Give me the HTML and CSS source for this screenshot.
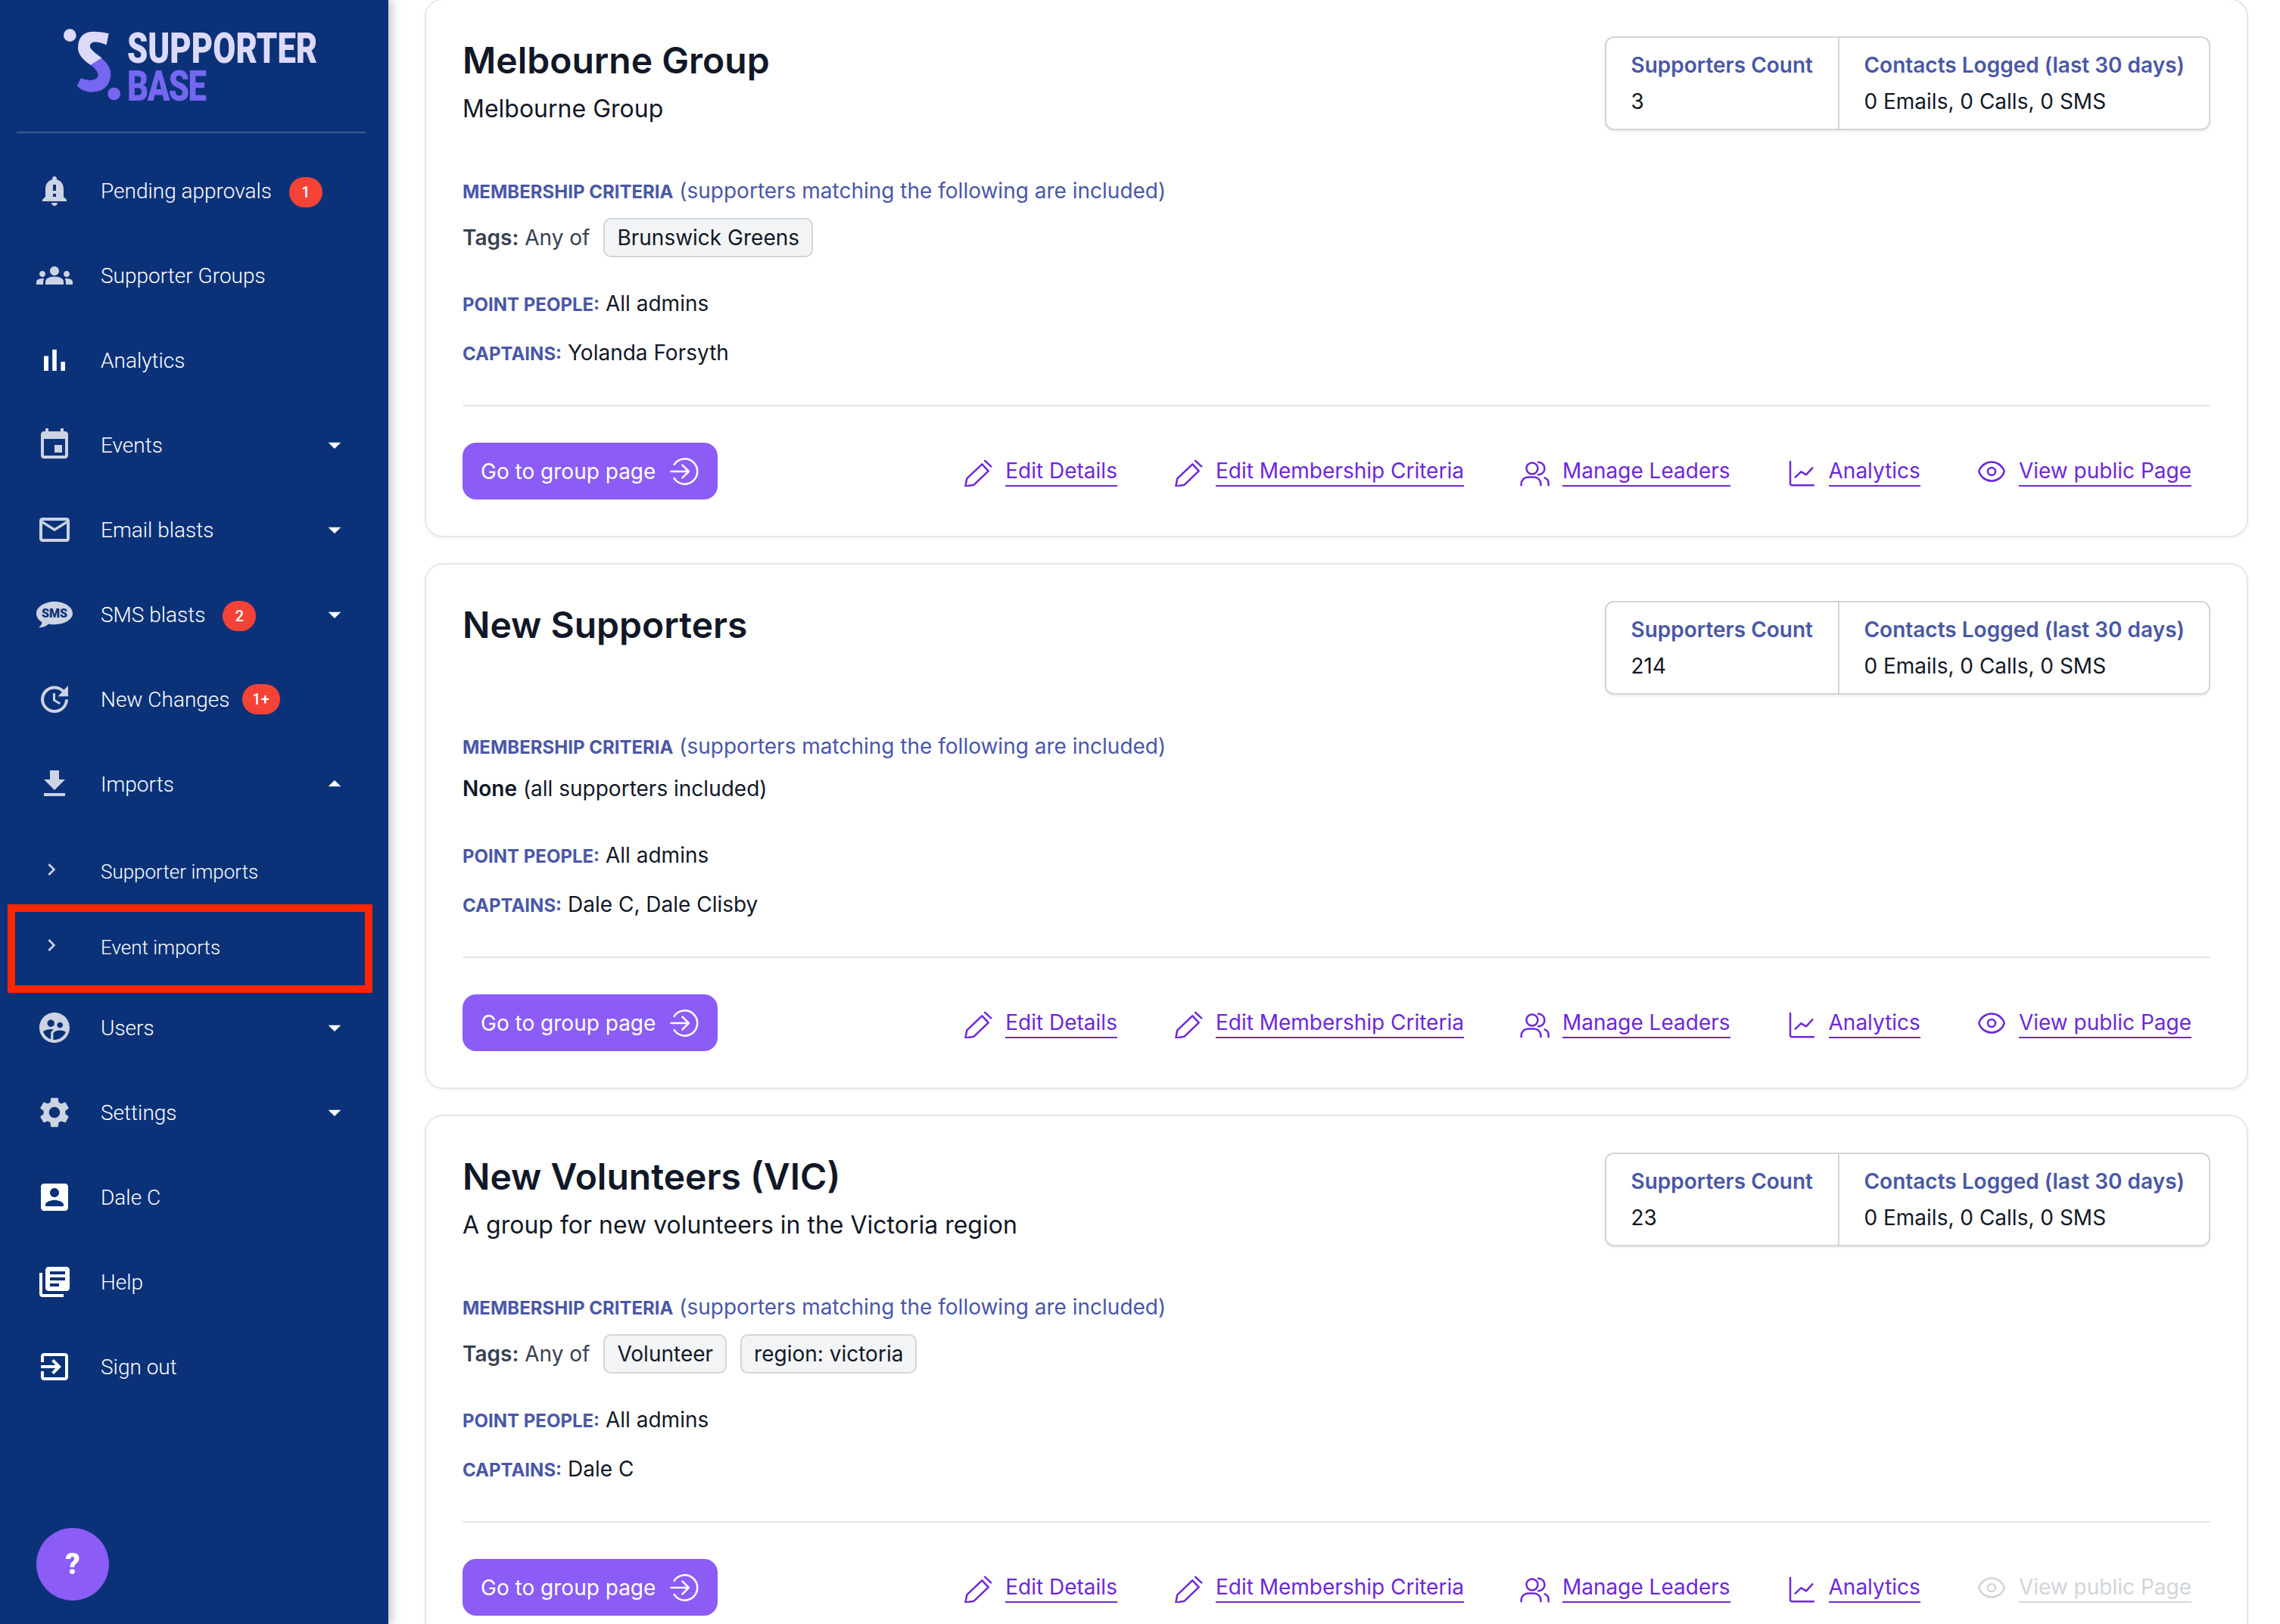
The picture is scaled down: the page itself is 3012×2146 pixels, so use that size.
FILE: index.html
```html
<!DOCTYPE html>
<html lang="en">
<head>
    <meta charset="UTF-8">
    <title>Supporter Groups - Supporter Base</title>
    <link rel="stylesheet" href="styles.css">
</head>
<body>
    <svg class="icon-defs" width="0" height="0">
        <symbol id="i-pencil" viewBox="0 0 24 24" overflow="visible"><path d="M15.200 6.200L20.200 11.600 8.800 22.600 2 23.800 3.200 17.600zM17.500 3.500L22.300 8" fill="none" stroke="currentColor" stroke-width="1.500" stroke-linejoin="round" stroke-linecap="round"/></symbol>
        <symbol id="i-users" viewBox="0 0 24 24" overflow="visible"><circle cx="9.600" cy="9.600" r="4.500" fill="none" stroke="currentColor" stroke-width="1.500"/><path d="M14.500 4.600a5 5 0 0 1 0 10M1 23v-1a5.500 5.500 0 0 1 5.500-5.500h4.500a5.500 5.500 0 0 1 5.500 5.500v1M19.600 17a5 5 0 0 1 3 5v1" fill="none" stroke="currentColor" stroke-width="1.500" stroke-linecap="round"/></symbol>
        <symbol id="i-chart" viewBox="0 0 24 24" overflow="visible"><path d="M3 4.200V21.500A1.500 1.500 0 0 0 4.500 23H21.600M7 16.600l4.600-4.400 4 2.400 5-5.400" fill="none" stroke="currentColor" stroke-width="1.500" stroke-linecap="round" stroke-linejoin="round"/></symbol>
        <symbol id="i-eye" viewBox="0 0 24 24"><path d="M2.036 12.322a1.012 1.012 0 010-.639C3.423 7.510 7.360 4.500 12 4.500c4.638 0 8.573 3.007 9.963 7.178.07.207.07.431 0 .639C20.577 16.490 16.640 19.500 12 19.500c-4.638 0-8.573-3.007-9.963-7.178z" fill="none" stroke="currentColor" stroke-width="1.500"/><circle cx="12" cy="12" r="3" fill="none" stroke="currentColor" stroke-width="1.500"/></symbol>
        <symbol id="i-go" viewBox="0 0 24 24"><path d="M4 6.500a10 10 0 1 1 0 11M1.500 12H15M10.500 7l5 5-5 5" fill="none" stroke="currentColor" stroke-width="1.500" stroke-linecap="round" stroke-linejoin="round"/></symbol>
        <symbol id="i-drop" viewBox="0 0 24 24"><path d="M7 10l5 5 5-5z" fill="currentColor"/></symbol>
        <symbol id="i-up" viewBox="0 0 24 24"><path d="M7 14l5-5 5 5z" fill="currentColor"/></symbol>
        <symbol id="i-chevron" viewBox="0 0 24 24"><path d="M10 6L8.590 7.410 13.170 12l-4.580 4.590L10 18l6-6z" fill="currentColor"/></symbol>
    </svg>

    <div class="layout">
        <aside class="sidebar">
            <div class="logo">
                <svg class="logo-mark" viewBox="40 30 240 300" width="80" height="100">
                    <circle cx="68" cy="65" r="25" fill="#dcd9fb"/>
                    <path d="M222 58L213 103Q180 88 160 92 145 98 148 112 152 125 195 155L150 183Q100 150 100 115 100 50 165 50 195 50 222 58z" fill="#dcd9fb"/>
                    <path d="M193 155Q235 190 230 225 222 290 150 290 120 290 96 265L112 235Q135 245 150 243 180 240 180 222 180 205 150 183z" fill="#7567f0"/>
                    <circle cx="243" cy="297" r="25" fill="#7567f0"/>
                </svg>
                <div class="logo-text">
                    <span class="logo-top">SUPPORTER</span>
                    <span class="logo-bottom">BASE</span>
                </div>
            </div>

            <nav class="nav">
                <a class="nav-item">
                    <svg class="nav-icon muted" viewBox="0 0 24 24"><path d="M18 16v-5c0-3.070-1.640-5.640-4.500-6.320V4c0-.83-.67-1.500-1.500-1.500s-1.500.67-1.500 1.500v.68C7.630 5.360 6 7.920 6 11v5l-2 2v1h16v-1l-2-2zm-5 0h-2v-2h2v2zm0-4h-2V8h2v4zm-1 10c1.100 0 2-.9 2-2h-4c0 1.100.9 2 2 2z"/></svg>
                    <span class="nav-label">Pending approvals</span>
                    <span class="badge">1</span>
                </a>
                <a class="nav-item">
                    <svg class="nav-icon muted" viewBox="0 0 24 24"><path d="M12 12.750c1.630 0 3.070.39 4.240.9 1.080.48 1.760 1.560 1.760 2.730V18H6v-1.610c0-1.180.68-2.260 1.760-2.730 1.170-.52 2.610-.91 4.240-.91zM4 13c1.100 0 2-.9 2-2s-.9-2-2-2-2 .9-2 2 .9 2 2 2zm1.130 1.100C4.760 14.040 4.390 14 4 14c-.99 0-1.930.21-2.780.58C.48 14.900 0 15.620 0 16.430V18h4.500v-1.610c0-.83.23-1.610.63-2.290zM20 13c1.100 0 2-.9 2-2s-.9-2-2-2-2 .9-2 2 .9 2 2 2zm4 3.430c0-.81-.48-1.530-1.220-1.850C21.930 14.210 20.990 14 20 14c-.39 0-.76.04-1.130.1.4.68.63 1.460.63 2.290V18H24v-1.570zM12 6c1.660 0 3 1.340 3 3s-1.340 3-3 3-3-1.340-3-3 1.340-3 3-3z"/></svg>
                    <span class="nav-label">Supporter Groups</span>
                </a>
                <a class="nav-item">
                    <svg class="nav-icon" viewBox="0 0 24 24"><path d="M5 9.200h3V19H5zM10.600 5h2.800v14h-2.800zm5.600 8H19v6h-2.800z"/></svg>
                    <span class="nav-label">Analytics</span>
                </a>
                <a class="nav-item">
                    <svg class="nav-icon muted" viewBox="0 0 24 24"><path d="M17 12h-5v5h5v-5zM16 1v2H8V1H6v2H5c-1.110 0-1.990.9-1.990 2L3 19c0 1.100.89 2 2 2h14c1.100 0 2-.9 2-2V5c0-1.100-.9-2-2-2h-1V1h-2zm3 18H5V8h14v11z"/></svg>
                    <span class="nav-label">Events</span>
                    <svg class="caret"><use href="#i-drop"/></svg>
                </a>
                <a class="nav-item">
                    <svg class="nav-icon muted" viewBox="0 0 24 24"><path d="M20 4H4c-1.100 0-1.990.9-1.990 2L2 18c0 1.100.9 2 2 2h16c1.100 0 2-.9 2-2V6c0-1.100-.9-2-2-2zm0 14H4V8l8 5 8-5v10zm-8-7L4 6h16l-8 5z"/></svg>
                    <span class="nav-label">Email blasts</span>
                    <svg class="caret"><use href="#i-drop"/></svg>
                </a>
                <a class="nav-item">
                    <svg class="nav-icon muted" viewBox="0 0 24 24"><path d="M12 3.500C5.400 3.500 0 7 0 11.400c0 2.300 1.500 4.400 3.800 5.800-.3 1.500-1.300 2.700-2.300 3.400 2.600.1 5-.9 6.600-2.400 1.300.3 2.600.4 3.900.4 6.600 0 12-3.300 12-7.200C24 7 18.600 3.500 12 3.500z"/><text class="sms-text" x="12" y="13.900" text-anchor="middle">SMS</text></svg>
                    <span class="nav-label">SMS blasts</span>
                    <span class="badge">2</span>
                    <svg class="caret"><use href="#i-drop"/></svg>
                </a>
                <a class="nav-item">
                    <svg class="nav-icon muted" viewBox="0 0 24 24"><path d="M21 10.120h-6.780l2.740-2.820c-2.730-2.700-7.150-2.800-9.880-.1-2.730 2.710-2.730 7.080 0 9.790s7.150 2.710 9.880 0C18.320 15.650 19 14.080 19 12.100h2c0 1.980-.88 4.550-2.640 6.290-3.510 3.480-9.210 3.480-12.720 0-3.500-3.470-3.530-9.110-.02-12.580s9.140-3.470 12.650 0L21 3v7.120zM12.500 8v4.250l3.500 2.080-.72 1.210L11 13V8h1.500z"/></svg>
                    <span class="nav-label">New Changes</span>
                    <span class="badge badge-wide">1+</span>
                </a>
                <a class="nav-item">
                    <svg class="nav-icon muted" viewBox="0 0 24 24"><path d="M19 9h-4V3H9v6H5l7 7 7-7zM5 18v2h14v-2H5z"/></svg>
                    <span class="nav-label">Imports</span>
                    <svg class="caret"><use href="#i-up"/></svg>
                </a>
                <div class="sub-nav">
                    <a class="sub-item">
                        <svg class="sub-chevron"><use href="#i-chevron"/></svg>
                        <span class="sub-label">Supporter imports</span>
                    </a>
                    <a class="sub-item highlighted">
                        <svg class="sub-chevron"><use href="#i-chevron"/></svg>
                        <span class="sub-label">Event imports</span>
                    </a>
                </div>
                <a class="nav-item">
                    <svg class="nav-icon muted" viewBox="0 0 24 24"><path d="M11.990 2c-5.520 0-10 4.480-10 10s4.480 10 10 10 10-4.480 10-10-4.480-10-10-10zm3.610 6.340c1.070 0 1.930.86 1.930 1.930 0 1.070-.86 1.930-1.930 1.930-1.070 0-1.930-.86-1.930-1.930-.01-1.070.86-1.930 1.930-1.930zm-6-1.580c1.300 0 2.360 1.060 2.360 2.360 0 1.300-1.060 2.360-2.360 2.360s-2.360-1.060-2.360-2.360c0-1.310 1.050-2.360 2.360-2.360zm0 9.130v3.750c-2.400-.75-4.300-2.600-5.140-4.960 1.050-1.120 3.670-1.690 5.140-1.690.53 0 1.200.08 1.900.22-1.640.87-1.900 2.020-1.900 2.680zM11.990 20c-.27 0-.53-.01-.79-.04v-4.070c0-1.420 2.940-2.130 4.400-2.130 1.070 0 2.920.39 3.840 1.150-1.170 2.970-4.060 5.090-7.450 5.090z"/></svg>
                    <span class="nav-label">Users</span>
                    <svg class="caret"><use href="#i-drop"/></svg>
                </a>
                <a class="nav-item">
                    <svg class="nav-icon muted" viewBox="0 0 24 24"><path d="M19.140 12.940c.04-.3.06-.61.06-.94 0-.32-.02-.64-.07-.94l2.030-1.580c.18-.14.23-.41.12-.61l-1.920-3.320c-.12-.22-.37-.29-.59-.22l-2.390.96c-.5-.38-1.030-.7-1.620-.94l-.36-2.540c-.04-.24-.24-.41-.48-.41h-3.840c-.24 0-.43.17-.47.41l-.36 2.540c-.59.24-1.130.57-1.620.94l-2.390-.96c-.22-.08-.47 0-.59.22L2.740 8.870c-.12.21-.08.47.12.61l2.030 1.580c-.05.3-.09.63-.09.94s.02.64.07.94l-2.030 1.580c-.18.14-.23.41-.12.61l1.920 3.320c.12.22.37.29.59.22l2.390-.96c.5.38 1.030.7 1.620.94l.36 2.540c.05.24.24.41.48.41h3.840c.24 0 .44-.17.47-.41l.36-2.540c.59-.24 1.130-.56 1.620-.94l2.390.96c.22.08.47 0 .59-.22l1.920-3.320c.12-.22.07-.47-.12-.61l-2.010-1.580zM12 15.600c-1.980 0-3.600-1.620-3.600-3.600s1.620-3.600 3.600-3.600 3.600 1.620 3.600 3.600-1.620 3.600-3.600 3.600z"/></svg>
                    <span class="nav-label">Settings</span>
                    <svg class="caret"><use href="#i-drop"/></svg>
                </a>
                <a class="nav-item">
                    <svg class="nav-icon" viewBox="0 0 24 24"><path d="M3 5v14c0 1.100.89 2 2 2h14c1.100 0 2-.9 2-2V5c0-1.100-.9-2-2-2H5c-1.110 0-2 .9-2 2zm12 4c0 1.660-1.340 3-3 3s-3-1.340-3-3 1.340-3 3-3 3 1.340 3 3zm-9 8c0-2 4-3.100 6-3.100s6 1.100 6 3.100v1H6v-1z"/></svg>
                    <span class="nav-label">Dale C</span>
                </a>
                <a class="nav-item">
                    <svg class="nav-icon" viewBox="0 0 24 24"><path d="M4 6H2v14c0 1.100.9 2 2 2h14v-2H4V6zm16-4H8c-1.100 0-2 .9-2 2v12c0 1.100.9 2 2 2h12c1.100 0 2-.9 2-2V4c0-1.100-.9-2-2-2zm-1 9H9V9h10v2zm-4 4H9v-2h6v2zm4-8H9V5h10v2z"/></svg>
                    <span class="nav-label">Help</span>
                </a>
                <a class="nav-item">
                    <svg class="nav-icon" viewBox="0 0 24 24"><path d="M10.090 15.590L11.500 17l5-5-5-5-1.410 1.410L12.670 11H3v2h9.670l-2.580 2.590zM19 3H5c-1.110 0-2 .9-2 2v4h2V5h14v14H5v-4H3v4c0 1.100.89 2 2 2h14c1.100 0 2-.9 2-2V5c0-1.100-.9-2-2-2z"/></svg>
                    <span class="nav-label">Sign out</span>
                </a>
            </nav>

            <button class="help-button">?</button>
        </aside>

        <main class="main">
            <section class="card">
                <div class="card-head">
                    <div class="card-title">
                        <h2>Melbourne Group</h2>
                        <p class="card-desc">Melbourne Group</p>
                    </div>
                    <div class="stats">
                        <div class="stat stat-count">
                            <div class="stat-name">Supporters Count</div>
                            <div class="stat-value">3</div>
                        </div>
                        <div class="stat">
                            <div class="stat-name">Contacts Logged (last 30 days)</div>
                            <div class="stat-value">0 Emails, 0 Calls, 0 SMS</div>
                        </div>
                    </div>
                </div>
                <div class="criteria-title"><span class="caps">MEMBERSHIP CRITERIA</span> (supporters matching the following are included)</div>
                <div class="criteria-line has-tags"><span class="tags-label"><b>Tags:</b> Any of</span><span class="tag">Brunswick Greens</span></div>
                <div class="people-line"><span class="caps">POINT PEOPLE:</span> All admins</div>
                <div class="people-line"><span class="caps">CAPTAINS:</span> Yolanda Forsyth</div>
                <div class="card-actions">
                    <a class="go-button">Go to group page <svg class="go-icon"><use href="#i-go"/></svg></a>
                    <div class="links">
                        <a class="link"><svg class="link-icon"><use href="#i-pencil"/></svg><span>Edit Details</span></a>
                        <a class="link"><svg class="link-icon"><use href="#i-pencil"/></svg><span>Edit Membership Criteria</span></a>
                        <a class="link"><svg class="link-icon"><use href="#i-users"/></svg><span>Manage Leaders</span></a>
                        <a class="link"><svg class="link-icon"><use href="#i-chart"/></svg><span>Analytics</span></a>
                        <a class="link"><svg class="link-icon"><use href="#i-eye"/></svg><span>View public Page</span></a>
                    </div>
                </div>
            </section>

            <section class="card">
                <div class="card-head">
                    <div class="card-title">
                        <h2>New Supporters</h2>
                    </div>
                    <div class="stats">
                        <div class="stat stat-count">
                            <div class="stat-name">Supporters Count</div>
                            <div class="stat-value">214</div>
                        </div>
                        <div class="stat">
                            <div class="stat-name">Contacts Logged (last 30 days)</div>
                            <div class="stat-value">0 Emails, 0 Calls, 0 SMS</div>
                        </div>
                    </div>
                </div>
                <div class="criteria-title"><span class="caps">MEMBERSHIP CRITERIA</span> (supporters matching the following are included)</div>
                <div class="criteria-line"><b class="none">None</b> (all supporters included)</div>
                <div class="people-line"><span class="caps">POINT PEOPLE:</span> All admins</div>
                <div class="people-line"><span class="caps">CAPTAINS:</span> Dale C, Dale Clisby</div>
                <div class="card-actions">
                    <a class="go-button">Go to group page <svg class="go-icon"><use href="#i-go"/></svg></a>
                    <div class="links">
                        <a class="link"><svg class="link-icon"><use href="#i-pencil"/></svg><span>Edit Details</span></a>
                        <a class="link"><svg class="link-icon"><use href="#i-pencil"/></svg><span>Edit Membership Criteria</span></a>
                        <a class="link"><svg class="link-icon"><use href="#i-users"/></svg><span>Manage Leaders</span></a>
                        <a class="link"><svg class="link-icon"><use href="#i-chart"/></svg><span>Analytics</span></a>
                        <a class="link"><svg class="link-icon"><use href="#i-eye"/></svg><span>View public Page</span></a>
                    </div>
                </div>
            </section>

            <section class="card">
                <div class="card-head">
                    <div class="card-title">
                        <h2>New Volunteers (VIC)</h2>
                        <p class="card-desc">A group for new volunteers in the Victoria region</p>
                    </div>
                    <div class="stats">
                        <div class="stat stat-count">
                            <div class="stat-name">Supporters Count</div>
                            <div class="stat-value">23</div>
                        </div>
                        <div class="stat">
                            <div class="stat-name">Contacts Logged (last 30 days)</div>
                            <div class="stat-value">0 Emails, 0 Calls, 0 SMS</div>
                        </div>
                    </div>
                </div>
                <div class="criteria-title"><span class="caps">MEMBERSHIP CRITERIA</span> (supporters matching the following are included)</div>
                <div class="criteria-line has-tags"><span class="tags-label"><b>Tags:</b> Any of</span><span class="tag">Volunteer</span><span class="tag">region: victoria</span></div>
                <div class="people-line"><span class="caps">POINT PEOPLE:</span> All admins</div>
                <div class="people-line"><span class="caps">CAPTAINS:</span> Dale C</div>
                <div class="card-actions">
                    <a class="go-button">Go to group page <svg class="go-icon"><use href="#i-go"/></svg></a>
                    <div class="links">
                        <a class="link"><svg class="link-icon"><use href="#i-pencil"/></svg><span>Edit Details</span></a>
                        <a class="link"><svg class="link-icon"><use href="#i-pencil"/></svg><span>Edit Membership Criteria</span></a>
                        <a class="link"><svg class="link-icon"><use href="#i-users"/></svg><span>Manage Leaders</span></a>
                        <a class="link"><svg class="link-icon"><use href="#i-chart"/></svg><span>Analytics</span></a>
                        <a class="link disabled"><svg class="link-icon"><use href="#i-eye"/></svg><span>View public Page</span></a>
                    </div>
                </div>
            </section>
        </main>
    </div>
</body>
</html>
```

FILE: styles.css
```css
* {
    box-sizing: border-box;
}
html, body {
    height: 100%;
}
body {
    margin: 0;
    overflow: hidden;
    background: #fff;
    font-family: 'Inter', sans-serif;
    color: #111827;
}
.icon-defs {
    position: absolute;
}
.layout {
    display: flex;
    height: 2146px;
    overflow: hidden;
}

/* sidebar */
.sidebar {
    position: relative;
    flex: 0 0 513px;
    min-width: 0;
    background: #0b3279;
    box-shadow: 4px 0 12px rgba(0, 0, 0, 0.25);
    font-family: 'Roboto', sans-serif;
    color: #fff;
    z-index: 1;
}
.logo {
    display: flex;
    align-items: flex-start;
    height: 176px;
    margin: 0 30px 20px 22px;
    padding: 35px 0 0 61px;
    border-bottom: 2px solid #3b5a94;
}
.logo-mark {
    flex: none;
    margin-right: 5px;
}
.logo-text {
    display: flex;
    flex-direction: column;
    width: 252px;
    margin-top: 4px;
    transform: scaleX(0.78);
    transform-origin: left top;
    font-weight: 900;
    font-size: 56px;
    line-height: 50px;
    white-space: nowrap;
}
.logo-top {
    color: #dcd9fb;
}
.logo-bottom {
    color: #7567f0;
    letter-spacing: -2px;
}
.nav-item {
    display: flex;
    align-items: center;
    height: 112px;
    padding: 0 51px 0 48px;
}
.nav-icon {
    flex: none;
    width: 48px;
    height: 48px;
    margin-right: 37px;
    fill: #fff;
}
.nav-icon.muted {
    fill: #cdd3e3;
}
.sms-text {
    font-family: 'Roboto', sans-serif;
    font-size: 8px;
    font-weight: 900;
    fill: #0b3279;
}
.nav-label {
    font-size: 28px;
    font-weight: 300;
}
.badge {
    display: flex;
    align-items: center;
    justify-content: center;
    width: 44px;
    height: 40px;
    margin: 4px 0 0 23px;
    border-radius: 20px;
    background: #f44336;
    font-size: 20px;
    font-weight: 500;
}
.badge-wide {
    width: 50px;
    margin: 0 0 0 16px;
}
.caret {
    width: 40px;
    height: 40px;
    margin-left: auto;
    color: #fff;
}
.sub-nav {
    padding-top: 10px;
}
.sub-item {
    position: relative;
    display: flex;
    align-items: center;
    height: 100px;
    padding-left: 52px;
}
.sub-chevron {
    width: 32px;
    height: 32px;
    margin: -6px 49px 0 0;
    color: #cdd3e3;
}
.sub-label {
    font-size: 26px;
    font-weight: 300;
}
.highlighted::after {
    content: "";
    position: absolute;
    top: -7px;
    bottom: -10px;
    left: 10px;
    right: 21px;
    border: 10px solid #ff2600;
}
.help-button {
    position: absolute;
    left: 48px;
    bottom: 31px;
    width: 96px;
    height: 96px;
    border: none;
    border-radius: 50%;
    background: #8b5cf6;
    color: #fff;
    font-family: 'Roboto', sans-serif;
    font-size: 38px;
    font-weight: 900;
}

/* group cards */
.main {
    flex: 1;
    min-width: 0;
    margin-top: -2px;
    padding: 0 42px 0 48px;
}
.card {
    margin-bottom: 34px;
    padding: 48px;
    border: 2px solid #e5e7eb;
    border-radius: 24px;
    background: #fff;
    box-shadow: 0 2px 4px rgba(0, 0, 0, 0.05);
    font-size: 28px;
    line-height: 40px;
}
.card-head {
    display: flex;
    justify-content: space-between;
    align-items: flex-start;
    margin-bottom: 48px;
}
.card-title {
    min-width: 0;
}
.card-title h2 {
    margin: 0;
    font-size: 48px;
    font-weight: 600;
    line-height: 64px;
}
.card-desc {
    margin: 8px 0 16px;
    font-size: 32px;
    line-height: 48px;
}
.stats {
    display: flex;
    border: 2px solid #d1d5db;
    border-radius: 12px;
    box-shadow: 0 2px 3px rgba(0, 0, 0, 0.08);
}
.stat {
    padding: 16px 32px;
}
.stat-count {
    width: 308px;
    border-right: 2px solid #d1d5db;
}
.stat-name {
    margin-bottom: 8px;
    color: #4a57a8;
    font-weight: 600;
}
.criteria-title {
    color: #4a57a8;
}
.caps {
    color: #4a57a8;
    font-size: 24px;
    font-weight: 700;
}
.criteria-line {
    display: flex;
    align-items: center;
    margin-top: 14px;
    white-space: pre;
}
.has-tags {
    margin-bottom: -7px;
}
.criteria-line b {
    font-weight: 600;
}
.tags-label {
    color: #374151;
}
.none {
    color: #111827;
}
.tag {
    margin-left: 18px;
    padding: 4px 16px;
    border: 2px solid #d1d5db;
    border-radius: 10px;
    background: #f3f4f6;
}
.people-line {
    margin-top: 48px;
}
.people-line + .people-line {
    margin-top: 23px;
}
.card-actions {
    display: flex;
    justify-content: space-between;
    align-items: center;
    margin-top: 47px;
    padding-top: 48px;
    border-top: 2px solid #e5e7eb;
}
.go-button {
    display: flex;
    align-items: center;
    height: 75px;
    padding: 0 24px;
    border-radius: 18px;
    background: #8b5cf6;
    color: #fff;
}
.go-icon {
    width: 40px;
    height: 40px;
    margin-left: 18px;
}
.links {
    display: flex;
    gap: 74px;
    padding-right: 25px;
}
.link {
    display: flex;
    align-items: center;
    color: #6d28d9;
}
.link span {
    border-bottom: 2px solid #6d28d9;
    line-height: 38px;
}
.link-icon {
    width: 40px;
    height: 40px;
    margin-right: 16px;
}
.link.disabled {
    color: #d1d5db;
}
.link.disabled span {
    border-color: #d1d5db;
}
```
